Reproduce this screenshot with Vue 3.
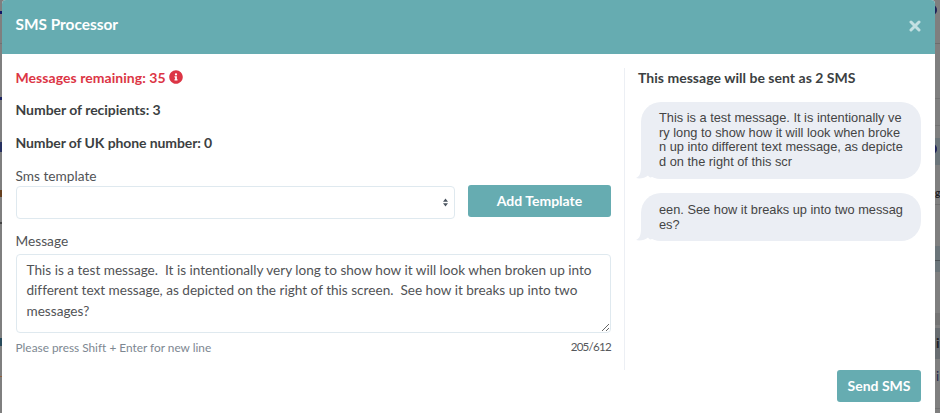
<template>
  <div class="page">
    <div class="behind left">
      <span v-for="m in leftMarks" :key="m.top" :style="{ top: m.top + 'px', height: m.height + 'px', background: m.color }"></span>
    </div>
    <div class="modal">
      <div class="modal-header">
        <h5>SMS Processor</h5>
        <button class="close" aria-label="Close">
          <svg viewBox="0 0 12 12" width="12" height="12"><path d="M2 2L10 10M10 2L2 10" /></svg>
        </button>
      </div>
      <div class="modal-body">
        <div class="form-side">
          <p class="info danger">
            <span class="t-remaining">Messages remaining: {{ remaining }}</span>
            <svg class="info-icon" viewBox="0 0 512 512" width="14" height="14"><path d="M256 8C119 8 8 119 8 256s111 248 248 248 248-111 248-248S393 8 256 8zm0 110a42 42 0 1 1 0 84 42 42 0 0 1 0-84zm56 254c0 7-5 12-12 12h-88c-7 0-12-5-12-12v-24c0-7 5-12 12-12h12v-64h-12c-7 0-12-5-12-12v-24c0-7 5-12 12-12h64c7 0 12 5 12 12v100h12c7 0 12 5 12 12v24z" /></svg>
          </p>
          <p class="info"><span class="t-recipients">Number of recipients: {{ recipients }}</span></p>
          <p class="info"><span class="t-uk">Number of UK phone number: {{ ukNumbers }}</span></p>
          <label class="template-label">Sms template</label>
          <div class="template-row">
            <div class="select">
              <svg viewBox="0 0 5 8" width="5" height="9"><path d="M2.5 0L0 3.2h5zM2.5 8L0 4.8h5z" /></svg>
            </div>
            <button class="btn btn-add">Add Template</button>
          </div>
          <label class="message-label">Message</label>
          <textarea v-model="message" class="message" spellcheck="false"></textarea>
          <div class="hint">
            <span class="help">Please press Shift + Enter for new line</span>
            <span class="count">{{ message.length }}/{{ maxLength }}</span>
          </div>
        </div>
        <div class="preview-side">
          <p class="preview-title">This message will be sent as {{ parts.length }} SMS</p>
          <div v-for="part in parts" :key="part" class="bubble">
            <svg class="tail" viewBox="0 0 16 22" width="16" height="22"><path d="M5 0H16V19C14 20 13 19 12 17.5C9 20 4 21 0 20C4 18.5 5 14 5 9Z" /></svg>
            <div class="bubble-text">{{ part }}</div>
          </div>
        </div>
      </div>
      <div class="modal-footer">
        <button class="btn btn-send">Send SMS</button>
      </div>
    </div>
    <div class="behind right">
      <span v-for="m in rightMarks" :key="m.top" :style="{ top: m.top + 'px', height: m.height + 'px', background: m.color }"></span>
      <i class="dot dot-top"></i>
      <i class="dot dot-mid"></i>
      <b class="cut cut-g">g</b>
      <b class="cut cut-i">i</b>
      <b class="cut cut-ai">i</b>
    </div>
  </div>
</template>

<script setup>
import { ref } from 'vue'

const remaining = ref(35)
const recipients = ref(3)
const ukNumbers = ref(0)
const maxLength = 612

const message = ref('This is a test message.  It is intentionally very long to show how it will look when broken up into different text message, as depicted on the right of this screen.  See how it breaks up into two messages?')

const parts = ref([
  'This is a test message. It is intentionally very long to show how it will look when broken up into different text message, as depicted on the right of this scr',
  'een. See how it breaks up into two messages?'
])

// page content showing through on both sides of the dialog
const leftMarks = [
  { top: 11, height: 3, color: '#101565' },
  { top: 43, height: 1, color: '#707274' },
  { top: 97, height: 3, color: '#1c2461' },
  { top: 142, height: 10, color: '#263060' },
  { top: 190, height: 7, color: '#65401f' },
  { top: 222, height: 2, color: '#444' },
  { top: 338, height: 8, color: '#294b5b' },
  { top: 376, height: 1, color: '#94613d' }
]
const rightMarks = [
  { top: 43, height: 1, color: '#6d6d6d' },
  { top: 98, height: 1, color: '#727272' },
  { top: 125, height: 1, color: '#727272' },
  { top: 138, height: 27, color: '#6b757a' },
  { top: 204, height: 1, color: '#707070' },
  { top: 246, height: 26, color: '#6b757a' },
  { top: 260, height: 1, color: '#4c5256' },
  { top: 313, height: 12, color: '#747474' },
  { top: 328, height: 31, color: '#686d71' },
  { top: 408, height: 1, color: '#707070' }
]
</script>

<style>
body { margin: 0; }
</style>

<style scoped>
.page { display: flex; width: 940px; height: 413px; overflow: hidden; background: #7f7f7f; font-family: Lato, sans-serif; font-size: 14px; font-variant-ligatures: none; color: #3c3f42; }
.behind { position: relative; flex: none; overflow: hidden; }
.behind span { position: absolute; left: 0; right: 0; }
.left { width: 2px; }
.right { width: 5px; }
.dot { position: absolute; left: -7px; width: 9px; height: 10px; border-radius: 50%; background: #1d2158; }
.dot-top { top: 5px; }
.dot-mid { top: 144px; }
.cut { position: absolute; line-height: 16px; color: #1e1e22; }
.cut-g { top: 184px; left: 0; font-size: 10px; }
.cut-i { top: 335px; left: 1px; font-size: 14px; }
.cut-ai { top: 368px; left: 1px; font-size: 13px; font-weight: 400; color: #23264a; }
.modal { display: flex; flex-direction: column; flex: 1; min-width: 0; background: #fff; border-radius: 4px 4px 0 0; }
.modal-header { display: flex; justify-content: space-between; box-sizing: border-box; height: 54px; padding: 14px 14px 0 13.5px; background: #66acb1; border-radius: 4px 4px 0 0; }
.modal-header h5 { margin: 0; font-size: 15.4px; font-weight: 700; line-height: 20px; color: #fff; }
.close { display: flex; margin-top: 6px; padding: 0; width: 12px; height: 12px; border: 0; background: none; }
.close path { fill: none; stroke: #c3e0e2; stroke-width: 3; stroke-linecap: round; }
.modal-body { display: flex; height: 302px; padding-top: 14px; }
.form-side { box-sizing: border-box; width: 623px; padding: 0 13px 0 13.5px; border-right: 1px solid #eceff4; }
.info { display: flex; align-items: center; gap: 3px; margin: 0 0 13px; height: 19.5px; line-height: 18.5px; font-weight: 700; white-space: nowrap; }
.danger { color: #dc3545; }
.t-remaining { letter-spacing: 0.05px; }
.t-recipients { letter-spacing: -0.04px; }
.t-uk { letter-spacing: -0.1px; }
.info-icon { margin-top: -2px; fill: #dc3545; }
label { display: block; line-height: 18px; font-size: 13.7px; color: #515356; }
.template-label { padding-top: 1px; }
.template-row { display: flex; gap: 13px; }
.select { box-sizing: border-box; display: flex; align-items: center; justify-content: flex-end; width: 439.5px; height: 33px; margin-top: 1px; padding-right: 6px; border: 1px solid #dfe9ef; border-radius: 4px; }
.select path { fill: #4b5560; }
.btn { height: 32px; padding: 0 0 1px; border: 0; border-radius: 3px; background: #66acb1; color: #fff; font-family: inherit; font-size: 14px; font-weight: 700; }
.btn-add { width: 143px; }
.message-label { margin-top: 13px; }
.message { display: block; box-sizing: border-box; width: 595.5px; height: 79px; margin: 4px 0 0; padding: 5px 9.5px 3px 10px; border: 1px solid #dfe9ef; border-radius: 4px; outline: none; resize: vertical; overflow: hidden; font-family: inherit; font-size: 13.6px; font-variant-ligatures: none; line-height: 20.5px; color: #515356; }
.hint { display: flex; justify-content: space-between; width: 595.5px; margin-top: 6px; line-height: 17px; font-size: 11.85px; }
.help { color: #7d8791; }
.count { margin-top: -1px; font-size: 11.6px; letter-spacing: -0.75px; color: #55585b; }
.preview-side { flex: 1; padding: 0 14px 0 13px; }
.preview-title { margin: 0 0 14.5px; line-height: 19px; font-weight: 700; letter-spacing: 0.03px; white-space: nowrap; }
.bubble { position: relative; box-sizing: border-box; width: 280px; margin: 0 0 14.5px 3px; padding: 9.5px 17px 9px 18px; border-radius: 20px; background: #ebeef4; }
.tail { position: absolute; left: -5px; bottom: -1px; fill: #ebeef4; }
.bubble-text { position: relative; font-family: "Liberation Sans", Arial, sans-serif; font-size: 12.8px; line-height: 14.7px; word-break: break-all; color: #444; }
.modal-footer { display: flex; justify-content: flex-end; padding-right: 14px; }
.btn-send { width: 84px; }
</style>
